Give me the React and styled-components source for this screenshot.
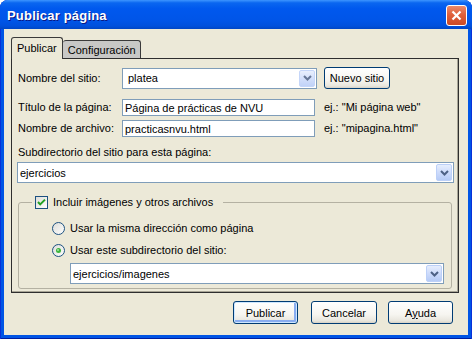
import styled, { createGlobalStyle, css } from 'styled-components';

const GlobalStyle = createGlobalStyle`
  html, body {
    margin: 0;
    padding: 0;
    background: #ffffff;
  }
  body {
    font-family: "Liberation Sans", Arial, sans-serif;
    font-size: 11px;
    color: #000000;
  }
  #root {
    width: 472px;
    height: 339px;
  }
`;

const Window = styled.div`
  width: 472px;
  height: 339px;
  display: flex;
  flex-direction: column;
  background: #0055e5;
  border-radius: 8px 8px 0 0;
  overflow: hidden;
  box-shadow: inset 1px 0 0 #0831d9, inset -1px 0 0 #0831d9, inset 0 -1px 0 #001ea0;
`;

const TitleBar = styled.div`
  flex: none;
  height: 29px;
  display: flex;
  align-items: center;
  justify-content: space-between;
  padding: 0 5px 0 7px;
  box-sizing: border-box;
  background: linear-gradient(
    180deg,
    #3d95ff 0%,
    #0a66f0 10%,
    #0058ee 30%,
    #0055e8 70%,
    #0050dc 90%,
    #0046c4 100%
  );
`;

const Title = styled.span`
  color: #ffffff;
  font-family: "Liberation Sans", Arial, sans-serif;
  font-weight: bold;
  font-size: 13px;
  letter-spacing: 0.2px;
  text-shadow: 1px 1px 0 #0a1883;
  padding-top: 1px;
`;

const CloseButton = styled.div`
  width: 21px;
  height: 21px;
  box-sizing: border-box;
  border: 1px solid #ffffff;
  border-radius: 3px;
  background: linear-gradient(180deg, #e98a6c 0%, #e0603c 45%, #cc4a25 100%);
  display: flex;
  align-items: center;
  justify-content: center;
  margin-top: 1px;
`;

const Client = styled.div`
  flex: 1;
  margin: 0 4px 4px;
  background: #ece9d8;
  display: flex;
  flex-direction: column;
  padding: 8px 0 0 7px;
`;

const TabStrip = styled.div`
  display: flex;
  align-items: flex-end;
  height: 21px;
  position: relative;
  z-index: 1;
`;

const Tab = styled.div`
  box-sizing: border-box;
  display: flex;
  align-items: center;
  border: 1px solid #3a3a3a;
  border-radius: 3px 3px 0 0;
  ${(p) =>
    p.$active
      ? css`
          height: 22px;
          padding: 0 5px 1px;
          margin-bottom: -1px;
          border-bottom: none;
          background: #ece9d8;
        `
      : css`
          height: 18px;
          padding: 0 4px 0 5px;
          border-left: none;
          border-bottom: none;
          background: #c8c8c6;
        `}
`;

const Panel = styled.div`
  width: 448px;
  height: 235px;
  box-sizing: border-box;
  border: 1px solid #2e2e2e;
  box-shadow: inset -1px -1px 0 #a8a596;
  padding: 8px 4px 0 6px;
  display: flex;
  flex-direction: column;
`;

const Row = styled.div`
  display: flex;
  align-items: center;
  flex: none;
  margin-top: ${(p) => p.$top || 0}px;
`;

const Label = styled.span`
  width: 104px;
  flex: none;
  line-height: 13px;
`;

const Combo = styled.div`
  box-sizing: border-box;
  height: 21px;
  width: ${(p) => (p.$width ? `${p.$width}px` : 'auto')};
  flex: none;
  border: 1px solid #7f9db9;
  background: #ffffff;
  display: flex;
  align-items: center;
  padding-left: ${(p) => p.$pad}px;
  margin: ${(p) => p.$margin || 0};
`;

const ComboText = styled.span`
  flex: 1;
  white-space: nowrap;
`;

const ComboButton = styled.div`
  flex: none;
  width: 16px;
  height: 17px;
  margin-right: 1px;
  box-sizing: border-box;
  border: 1px solid #bcd0f8;
  border-radius: 2px;
  background: linear-gradient(180deg, #e6eefd 0%, #cddbfb 50%, #b6cbf6 100%);
  display: flex;
  align-items: center;
  justify-content: center;
  opacity: ${(p) => (p.$faded ? 0.85 : 1)};
`;

const TextBox = styled.div`
  box-sizing: border-box;
  width: 193px;
  height: 17px;
  flex: none;
  border: 1px solid #7f9db9;
  background: #ffffff;
  padding-left: 2px;
  display: flex;
  align-items: center;
  white-space: nowrap;
`;

const Hint = styled.span`
  margin-left: 9px;
  white-space: nowrap;
  line-height: 13px;
`;

const Button = styled.div`
  box-sizing: border-box;
  height: ${(p) => p.$height || 23}px;
  width: ${(p) => p.$width}px;
  margin-left: ${(p) => p.$gap || 0}px;
  border: 1px solid #003c74;
  border-radius: 3px;
  background: linear-gradient(180deg, #ffffff 0%, #f6f5f0 60%, #e8e6dd 90%, #d6d0c5 100%);
  display: flex;
  align-items: center;
  justify-content: center;
  flex: none;
  ${(p) =>
    p.$default &&
    css`
      box-shadow: inset 0 0 0 1px #cee7ff, inset -1px -1px 0 2px #89adf0;
    `}
`;

const SubLabel = styled.div`
  flex: none;
  line-height: 13px;
  height: 13px;
  margin-top: 9px;
`;

const Group = styled.fieldset`
  flex: none;
  margin: 13px 2px 0 0;
  padding: 0 7px 4px 0;
  border: 1px solid #b4b1a2;
  border-radius: 3px;
  display: flex;
  flex-direction: column;
  min-width: 0;
`;

const Legend = styled.legend`
  margin-left: 13px;
  padding: 0 10px 0 3px;
  display: flex;
  align-items: center;
  height: 13px;
  line-height: 13px;
`;

const Check = styled.span`
  display: inline-flex;
  margin-right: 5px;
`;

const OptionRow = styled.div`
  display: flex;
  align-items: center;
  flex: none;
  height: 13px;
  line-height: 13px;
  margin: ${(p) => p.$top}px 0 0 33px;
`;

const ButtonBar = styled.div`
  display: flex;
  justify-content: flex-end;
  margin: 8px 15px 0 0;
`;

const Mnemonic = styled.span`
  text-decoration: underline;
`;

function Arrow() {
  return (
    <svg width="9" height="6" viewBox="0 0 9 6">
      <path d="M1 1 L4.5 4.5 L8 1" fill="none" stroke="#4d6185" strokeWidth="2" />
    </svg>
  );
}

function CheckBox() {
  return (
    <svg width="13" height="13" viewBox="0 0 13 13">
      <defs>
        <linearGradient id="cbg" x1="0" y1="0" x2="1" y2="1">
          <stop offset="0" stopColor="#dcdcd7" />
          <stop offset="1" stopColor="#ffffff" />
        </linearGradient>
      </defs>
      <rect x="0.5" y="0.5" width="12" height="12" fill="url(#cbg)" stroke="#1c5180" />
      <path d="M3 6 L5.2 8.4 L10 3.6" fill="none" stroke="#21a121" strokeWidth="2" />
    </svg>
  );
}

function Radio({ checked }) {
  return (
    <svg width="13" height="13" viewBox="0 0 13 13" style={{ marginRight: 5, flex: 'none' }}>
      <defs>
        <linearGradient id="rbg" x1="0" y1="0" x2="1" y2="1">
          <stop offset="0" stopColor="#dcdcd7" />
          <stop offset="1" stopColor="#ffffff" />
        </linearGradient>
      </defs>
      <circle cx="6.5" cy="6.5" r="6" fill="url(#rbg)" stroke="#1c5180" />
      {checked && <circle cx="6.5" cy="6.5" r="2.5" fill="#3cb43c" />}
      {checked && <circle cx="6" cy="6" r="1" fill="#a6e6a6" />}
    </svg>
  );
}

export default function App() {
  return (
    <>
      <GlobalStyle />
      <Window>
        <TitleBar>
          <Title>Publicar página</Title>
          <CloseButton>
            <svg width="11" height="11" viewBox="0 0 11 11">
              <path d="M1.5 1.5 L9.5 9.5 M9.5 1.5 L1.5 9.5" stroke="#ffffff" strokeWidth="2.2" />
            </svg>
          </CloseButton>
        </TitleBar>
        <Client>
          <TabStrip>
            <Tab $active>Publicar</Tab>
            <Tab>Configuración</Tab>
          </TabStrip>
          <Panel>
            <Row>
              <Label>Nombre del sitio:</Label>
              <Combo $width={195} $pad={5}>
                <ComboText>platea</ComboText>
                <ComboButton $faded>
                  <Arrow />
                </ComboButton>
              </Combo>
              <Button $width={66} $height={22} $gap={7}>
                Nuevo sitio
              </Button>
            </Row>
            <Row $top={10}>
              <Label>Título de la página:</Label>
              <TextBox>Página de prácticas de NVU</TextBox>
              <Hint>ej.: "Mi página web"</Hint>
            </Row>
            <Row $top={4}>
              <Label>Nombre de archivo:</Label>
              <TextBox>practicasnvu.html</TextBox>
              <Hint>ej.: "mipagina.html"</Hint>
            </Row>
            <SubLabel>Subdirectorio del sitio para esta página:</SubLabel>
            <Combo $pad={2} $margin="3px 0 0 -1px">
              <ComboText>ejercicios</ComboText>
              <ComboButton>
                <Arrow />
              </ComboButton>
            </Combo>
            <Group>
              <Legend>
                <Check>
                  <CheckBox />
                </Check>
                Incluir imágenes y otros archivos
              </Legend>
              <OptionRow $top={13}>
                <Radio />
                Usar la misma dirección como página
              </OptionRow>
              <OptionRow $top={9}>
                <Radio checked />
                Usar este subdirectorio del sitio:
              </OptionRow>
              <Combo $pad={2} $margin="6px 0 0 51px">
                <ComboText>ejercicios/imagenes</ComboText>
                <ComboButton>
                  <Arrow />
                </ComboButton>
              </Combo>
            </Group>
          </Panel>
          <ButtonBar>
            <Button $width={65} $default>
              Publicar
            </Button>
            <Button $width={66} $gap={13}>
              Cancelar
            </Button>
            <Button $width={65} $gap={11}>
              A<Mnemonic>y</Mnemonic>uda
            </Button>
          </ButtonBar>
        </Client>
      </Window>
    </>
  );
}
